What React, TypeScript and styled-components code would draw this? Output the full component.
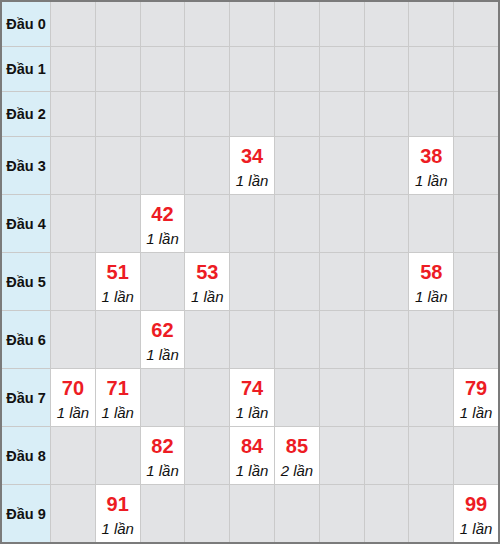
import React from "react";
import styled, { createGlobalStyle } from "styled-components";

const Global = createGlobalStyle`
  html, body { margin: 0; padding: 0; background: #ffffff; }
  body { font-family: "Liberation Sans", Arial, sans-serif; }
`;

const Board = styled.div`
  box-sizing: border-box;
  width: 500px;
  height: 544px;
  border: 2px solid #7b7b7b;
  background: #cacaca;
  display: grid;
  grid-template-columns: 48px repeat(10, 1fr);
  grid-template-rows: repeat(3, 44px) repeat(7, 57px);
  gap: 1px;
`;

const Head = styled.div`
  background: #d9eef7;
  color: #111;
  font-weight: bold;
  font-size: 14.5px;
  display: flex;
  align-items: center;
  justify-content: center;
  white-space: nowrap;
`;

const Cell = styled.div<{ $hit: boolean }>`
  background: ${(p) => (p.$hit ? "#ffffff" : "#e2e3e5")};
  display: flex;
  flex-direction: column;
  align-items: center;
  justify-content: center;
  gap: 4px;
  padding-top: 2px;
`;

const Num = styled.div`
  color: #ed1c24;
  font-weight: bold;
  font-size: 20px;
  line-height: 24px;
`;

const Count = styled.div`
  color: #111;
  font-style: italic;
  font-size: 15px;
  line-height: 18px;
  white-space: nowrap;
`;

const counts: Record<number, number> = {
  34: 1, 38: 1, 42: 1, 51: 1, 53: 1, 58: 1, 62: 1,
  70: 1, 71: 1, 74: 1, 79: 1, 82: 1, 84: 1, 85: 2, 91: 1, 99: 1,
};

export default function App() {
  const rows = Array.from({ length: 10 }, (_, r) => r);
  return (
    <>
      <Global />
      <Board>
        {rows.map((r) => (
          <React.Fragment key={r}>
            <Head>Đầu {r}</Head>
            {Array.from({ length: 10 }, (_, c) => {
              const n = r * 10 + c;
              const k = counts[n];
              return (
                <Cell key={c} $hit={!!k}>
                  {k ? (
                    <>
                      <Num>{String(n).padStart(2, "0")}</Num>
                      <Count>{k} lần</Count>
                    </>
                  ) : null}
                </Cell>
              );
            })}
          </React.Fragment>
        ))}
      </Board>
    </>
  );
}
